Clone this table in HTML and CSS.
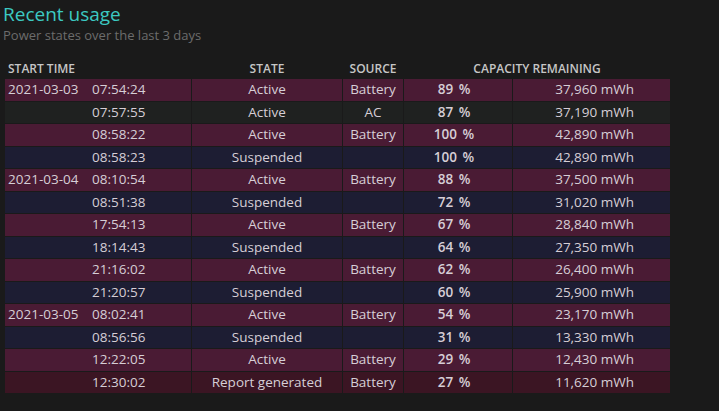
FILE: index.html
```html
<!DOCTYPE html>
<html>
<head>
<meta charset="utf-8">
<link rel="stylesheet" href="styles.css">
</head>
<body>
<div class="page">
  <h1 class="title">Recent usage</h1>
  <div class="subtitle">Power states over the last 3 days</div>
  <table class="usage">
    <colgroup>
      <col class="w-time"><col class="w-state"><col class="w-src"><col class="w-pct"><col class="w-mw">
    </colgroup>
    <thead>
      <tr>
        <th class="c-time">START TIME</th>
        <th class="c-state">STATE</th>
        <th class="c-src">SOURCE</th>
        <th class="c-cap" colspan="2">CAPACITY REMAINING</th>
      </tr>
    </thead>
    <tbody>
      <tr class="active"><td class="c-time"><span class="date">2021-03-03</span><span class="time">07:54:24</span></td><td class="c-state">Active</td><td class="c-src">Battery</td><td class="c-pct">89 %</td><td class="c-mw">37,960 mWh</td></tr>
      <tr class="ac"><td class="c-time"><span class="date"></span><span class="time">07:57:55</span></td><td class="c-state">Active</td><td class="c-src">AC</td><td class="c-pct">87 %</td><td class="c-mw">37,190 mWh</td></tr>
      <tr class="active"><td class="c-time"><span class="date"></span><span class="time">08:58:22</span></td><td class="c-state">Active</td><td class="c-src">Battery</td><td class="c-pct">100 %</td><td class="c-mw">42,890 mWh</td></tr>
      <tr class="suspended"><td class="c-time"><span class="date"></span><span class="time">08:58:23</span></td><td class="c-state">Suspended</td><td class="c-src"></td><td class="c-pct">100 %</td><td class="c-mw">42,890 mWh</td></tr>
      <tr class="active"><td class="c-time"><span class="date">2021-03-04</span><span class="time">08:10:54</span></td><td class="c-state">Active</td><td class="c-src">Battery</td><td class="c-pct">88 %</td><td class="c-mw">37,500 mWh</td></tr>
      <tr class="suspended"><td class="c-time"><span class="date"></span><span class="time">08:51:38</span></td><td class="c-state">Suspended</td><td class="c-src"></td><td class="c-pct">72 %</td><td class="c-mw">31,020 mWh</td></tr>
      <tr class="active"><td class="c-time"><span class="date"></span><span class="time">17:54:13</span></td><td class="c-state">Active</td><td class="c-src">Battery</td><td class="c-pct">67 %</td><td class="c-mw">28,840 mWh</td></tr>
      <tr class="suspended"><td class="c-time"><span class="date"></span><span class="time">18:14:43</span></td><td class="c-state">Suspended</td><td class="c-src"></td><td class="c-pct">64 %</td><td class="c-mw">27,350 mWh</td></tr>
      <tr class="active"><td class="c-time"><span class="date"></span><span class="time">21:16:02</span></td><td class="c-state">Active</td><td class="c-src">Battery</td><td class="c-pct">62 %</td><td class="c-mw">26,400 mWh</td></tr>
      <tr class="suspended"><td class="c-time"><span class="date"></span><span class="time">21:20:57</span></td><td class="c-state">Suspended</td><td class="c-src"></td><td class="c-pct">60 %</td><td class="c-mw">25,900 mWh</td></tr>
      <tr class="active"><td class="c-time"><span class="date">2021-03-05</span><span class="time">08:02:41</span></td><td class="c-state">Active</td><td class="c-src">Battery</td><td class="c-pct">54 %</td><td class="c-mw">23,170 mWh</td></tr>
      <tr class="suspended"><td class="c-time"><span class="date"></span><span class="time">08:56:56</span></td><td class="c-state">Suspended</td><td class="c-src"></td><td class="c-pct">31 %</td><td class="c-mw">13,330 mWh</td></tr>
      <tr class="active"><td class="c-time"><span class="date"></span><span class="time">12:22:05</span></td><td class="c-state">Active</td><td class="c-src">Battery</td><td class="c-pct">29 %</td><td class="c-mw">12,430 mWh</td></tr>
      <tr class="report"><td class="c-time"><span class="date"></span><span class="time">12:30:02</span></td><td class="c-state">Report generated</td><td class="c-src">Battery</td><td class="c-pct">27 %</td><td class="c-mw">11,620 mWh</td></tr>
    </tbody>
  </table>
</div>
</body>
</html>
```

FILE: styles.css
```css
html, body {
  margin: 0;
  padding: 0;
  background: #1a1a1a;
  height: 100%;
}
body {
  font-family: "Open Sans", "Noto Sans", sans-serif;
  color: #d6ced6;
}
.page {
  padding: 1px 0 0 3px;
}
.title {
  margin: 0;
  font-size: 19px;
  font-weight: 400;
  line-height: 26px;
  color: #3cc9c2;
}
.subtitle {
  font-size: 13px;
  line-height: 16px;
  color: #6c6c6c;
  margin-top: 0;
}
.usage {
  margin-top: 14px;
  margin-left: 1px;
  border-collapse: separate;
  border-spacing: 1px;
  table-layout: fixed;
  width: 667px;
  font-size: 13.5px;
}
.w-time { width: 186px; }
.w-state { width: 150px; }
.w-src { width: 60px; }
.w-pct { width: 108px; }
.w-mw { width: 157px; }
.usage th {
  font-size: 12px;
  font-weight: 600;
  color: #c6c6c6;
  height: 20px;
  padding: 0;
  vertical-align: middle;
  white-space: nowrap;
}
.usage td {
  height: 21.5px;
  padding: 0;
  line-height: 21px;
  white-space: nowrap;
}
.c-time { text-align: left; }
th.c-time { padding-left: 3px; }
.c-state { text-align: center; }
.c-src { text-align: center; }
.usage td.c-pct { text-align: center; font-weight: 600; padding-right: 8px; word-spacing: 2px; }
.usage td.c-mw { text-align: right; padding-right: 36px; }
.date {
  display: inline-block;
  width: 84px;
  padding-left: 3px;
}
.time { display: inline-block; }
tr.active td { background: #4a1b34; }
tr.suspended td { background: #1d1d33; }
tr.ac td { background: #1f2120; }
tr.report td { background: #3b1523; }
```
